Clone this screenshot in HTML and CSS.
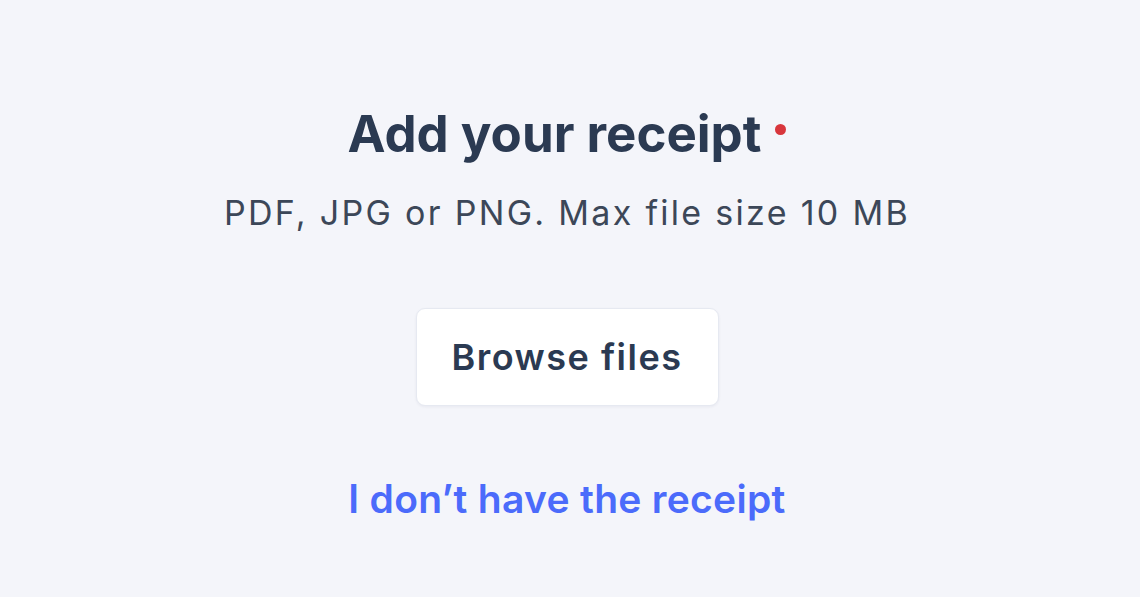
FILE: index.html
```html
<!DOCTYPE html>
<html>
<head>
<meta charset="utf-8">
<link rel="stylesheet" href="styles.css">
</head>
<body>
<main class="upload">
  <h1 class="title">Add your receipt<span class="required"></span></h1>
  <p class="hint">PDF, JPG or PNG. Max file size 10 MB</p>
  <button class="browse" type="button">Browse files</button>
  <a class="no-receipt" href="#">I don’t have the receipt</a>
</main>
</body>
</html>
```
FILE: styles.css
```css
html, body {
  margin: 0;
  padding: 0;
  background: #f4f5fa;
  height: 100%;
}
.upload {
  display: flex;
  flex-direction: column;
  align-items: center;
  padding: 104px 6px 0 0;
  font-family: Inter, "Liberation Sans", sans-serif;
  color: #2b3a52;
}
.title {
  margin: 0;
  font-size: 51px;
  font-weight: 700;
  line-height: 60px;
  display: flex;
  align-items: flex-start;
}
.required {
  width: 11px;
  height: 11px;
  border-radius: 50%;
  background: #d8363c;
  margin-left: 14px;
  margin-top: 20px;
}
.hint {
  margin: 29px 0 0;
  font-size: 34px;
  line-height: 40px;
  letter-spacing: 2.3px;
  color: #3c4758;
}
.browse {
  margin-top: 75px;
  width: 303px;
  height: 98px;
  background: #fff;
  border: 1px solid #e6e9f1;
  border-radius: 9px;
  box-shadow: 0 1px 3px rgba(30, 40, 80, 0.06);
  font-family: Inter, "Liberation Sans", sans-serif;
  font-size: 36px;
  font-weight: 600;
  letter-spacing: 1.5px;
  color: #2b3a52;
  padding: 0;
}
.no-receipt {
  margin-top: 70px;
  font-size: 39px;
  font-weight: 600;
  letter-spacing: 0.3px;
  color: #4b6bfb;
  text-decoration: none;
  line-height: 46px;
}
```
